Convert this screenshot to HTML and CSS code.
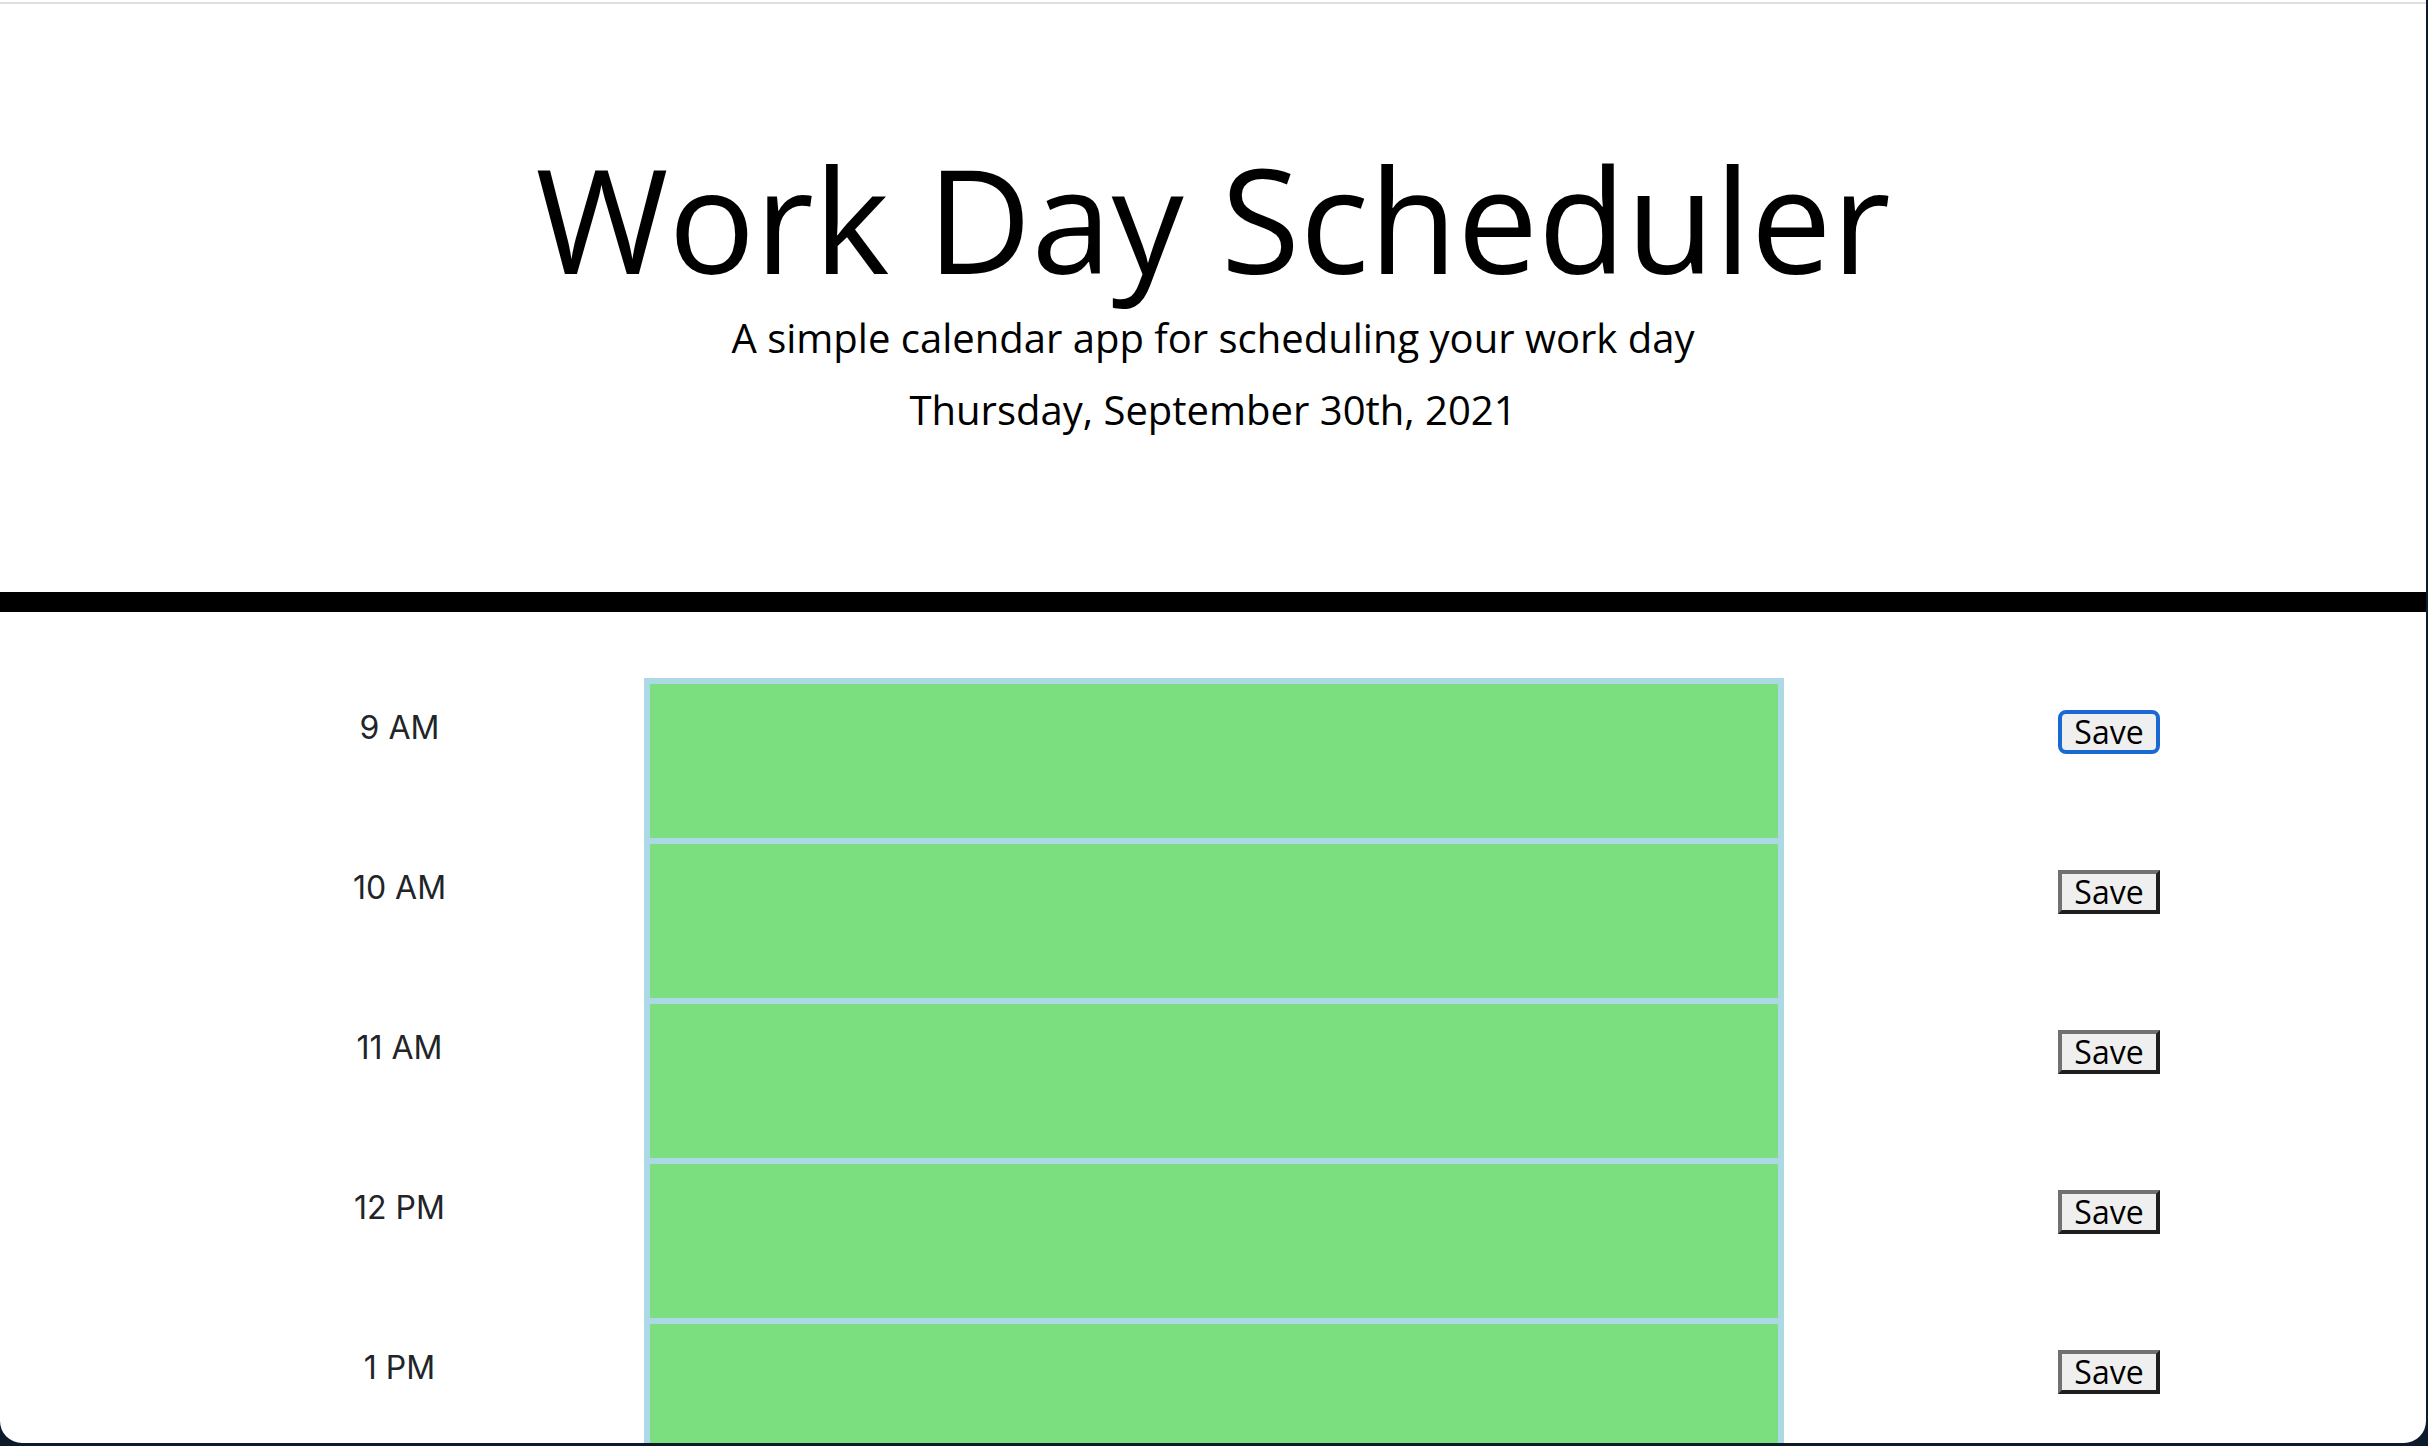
FILE: index.html
```html
<!DOCTYPE html>
<html lang="en">
<head>
<meta charset="utf-8">
<title>Work Day Scheduler</title>
<link rel="stylesheet" href="styles.css">
</head>
<body>
<div class="window">
  <div class="chrome-line"></div>
  <header class="jumbotron">
    <h1 class="display-3">Work Day Scheduler</h1>
    <p class="lead">A simple calendar app for scheduling your work day</p>
    <p class="lead current-day">Thursday, September 30th, 2021</p>
  </header>
  <main class="schedule">
    <div class="time-block">
      <div class="hour">9 AM</div>
      <textarea class="description future"></textarea>
      <div class="btn-cell"><button class="save-btn is-focused">Save</button></div>
    </div>
    <div class="time-block">
      <div class="hour">10 AM</div>
      <textarea class="description future"></textarea>
      <div class="btn-cell"><button class="save-btn">Save</button></div>
    </div>
    <div class="time-block">
      <div class="hour">11 AM</div>
      <textarea class="description future"></textarea>
      <div class="btn-cell"><button class="save-btn">Save</button></div>
    </div>
    <div class="time-block">
      <div class="hour">12 PM</div>
      <textarea class="description future"></textarea>
      <div class="btn-cell"><button class="save-btn">Save</button></div>
    </div>
    <div class="time-block">
      <div class="hour">1 PM</div>
      <textarea class="description future"></textarea>
      <div class="btn-cell"><button class="save-btn">Save</button></div>
    </div>
  </main>
</div>
</body>
</html>
```

FILE: styles.css
```css
html {
  margin: 0;
  padding: 0;
  background: #0d1a2b;
}

body {
  margin: 0;
  padding: 0;
  width: 2428px;
  height: 1446px;
  overflow: hidden;
  background: #0d1a2b;
}

.window {
  width: 2426px;
  height: 1443px;
  overflow: hidden;
  background: #ffffff;
  border-radius: 0 0 22px 22px;
  font-family: "Open Sans", sans-serif;
  font-size: 32px;
  line-height: 1;
  color: #000000;
}

.chrome-line {
  height: 2px;
  margin-top: 2px;
  background: #dcdfe4;
}

.jumbotron {
  text-align: center;
  padding: 128px 64px 130px;
  margin-bottom: 66px;
  border-bottom: 20px solid #000000;
}

.display-3 {
  margin: 0 0 13px;
  font-size: 144px;
  font-weight: 400;
  line-height: 1.2;
}

.lead {
  margin: 0 0 32px;
  font-size: 40px;
  font-weight: 400;
  line-height: 1;
}

.current-day {
  margin-bottom: 32px;
}

.schedule {
  display: flex;
  flex-direction: column;
}

.time-block {
  display: grid;
  grid-template-columns: 644px 1140px 1fr;
  height: 160px;
}

.hour {
  padding: 26px 0 0 155px;
  text-align: center;
  font-family: "Inter", "Liberation Sans", sans-serif;
  font-size: 32px;
  line-height: 48px;
  color: #212529;
}

.description {
  box-sizing: border-box;
  display: block;
  width: 1140px;
  height: 160px;
  margin: 0;
  padding: 20px;
  border: 6px solid #add8e6;
  border-bottom: 0;
  resize: none;
  outline: none;
  font-family: "Open Sans", sans-serif;
  font-size: 32px;
  color: #000000;
}

.future {
  background-color: #7bde7f;
}

.btn-cell {
  display: flex;
  justify-content: center;
  align-items: flex-start;
  padding: 32px 0 0 8px;
}

.save-btn {
  box-sizing: border-box;
  height: 44px;
  margin: 0;
  padding: 2px 12px;
  border: 4px solid;
  border-color: #717171 #1f1f1f #1f1f1f #717171;
  border-radius: 0;
  background: #efefef;
  font-family: "Open Sans", sans-serif;
  font-size: 32px;
  line-height: 32px;
  color: #000000;
}

.save-btn.is-focused {
  border: 4px solid #1a68d2;
  border-radius: 8px;
}
```
